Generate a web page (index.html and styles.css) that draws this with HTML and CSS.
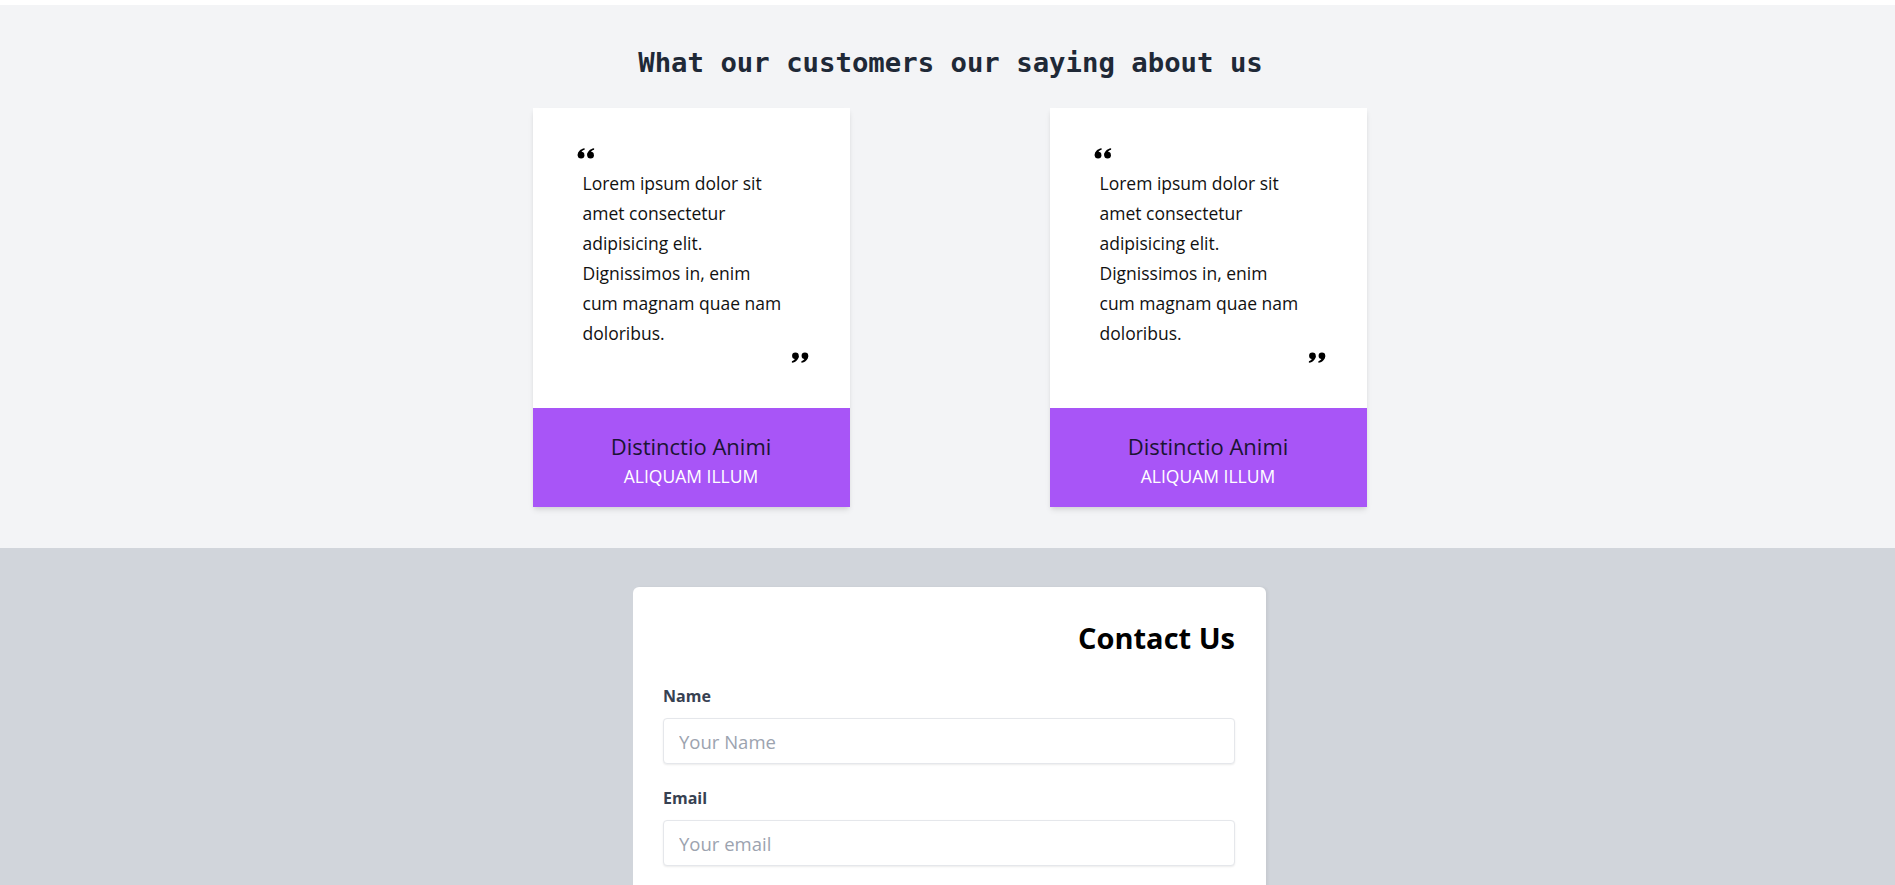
FILE: index.html
```html
<!DOCTYPE html>
<html lang="en">
<head>
<meta charset="utf-8">
<title>Testimonials</title>
<link rel="stylesheet" href="styles.css">
</head>
<body>
<section class="testimonials">
  <h2 class="section-title">What our customers our saying about us</h2>
  <div class="cards">
    <div class="card">
      <div class="card-body">
        <svg class="quote quote-open" viewBox="0 0 20 12" width="19" height="12" aria-hidden="true">
          <circle cx="4.3" cy="8.3" r="3.5"/>
          <path d="M0.8 8.3 C0.8 4.6 3.4 1.6 8 0.9 L8 2.7 C5.6 3.2 4.2 4.9 4.2 7.2 Z"/>
          <circle cx="14.3" cy="8.3" r="3.5"/>
          <path d="M10.8 8.3 C10.8 4.6 13.4 1.6 18 0.9 L18 2.7 C15.6 3.2 14.2 4.9 14.2 7.2 Z"/>
        </svg>
        <p class="quote-text">Lorem ipsum dolor sit<br>amet consectetur<br>adipisicing elit.<br>Dignissimos in, enim<br>cum magnam quae nam<br>doloribus.</p>
        <svg class="quote quote-close" viewBox="0 0 20 12" width="19" height="12" aria-hidden="true">
          <g transform="rotate(180 10 6)">
            <circle cx="4.3" cy="8.3" r="3.5"/>
            <path d="M0.8 8.3 C0.8 4.6 3.4 1.6 8 0.9 L8 2.7 C5.6 3.2 4.2 4.9 4.2 7.2 Z"/>
            <circle cx="14.3" cy="8.3" r="3.5"/>
            <path d="M10.8 8.3 C10.8 4.6 13.4 1.6 18 0.9 L18 2.7 C15.6 3.2 14.2 4.9 14.2 7.2 Z"/>
          </g>
        </svg>
      </div>
      <div class="card-footer">
        <div class="person-name">Distinctio Animi</div>
        <div class="person-role">ALIQUAM ILLUM</div>
      </div>
    </div>
    <div class="card">
      <div class="card-body">
        <svg class="quote quote-open" viewBox="0 0 20 12" width="19" height="12" aria-hidden="true">
          <circle cx="4.3" cy="8.3" r="3.5"/>
          <path d="M0.8 8.3 C0.8 4.6 3.4 1.6 8 0.9 L8 2.7 C5.6 3.2 4.2 4.9 4.2 7.2 Z"/>
          <circle cx="14.3" cy="8.3" r="3.5"/>
          <path d="M10.8 8.3 C10.8 4.6 13.4 1.6 18 0.9 L18 2.7 C15.6 3.2 14.2 4.9 14.2 7.2 Z"/>
        </svg>
        <p class="quote-text">Lorem ipsum dolor sit<br>amet consectetur<br>adipisicing elit.<br>Dignissimos in, enim<br>cum magnam quae nam<br>doloribus.</p>
        <svg class="quote quote-close" viewBox="0 0 20 12" width="19" height="12" aria-hidden="true">
          <g transform="rotate(180 10 6)">
            <circle cx="4.3" cy="8.3" r="3.5"/>
            <path d="M0.8 8.3 C0.8 4.6 3.4 1.6 8 0.9 L8 2.7 C5.6 3.2 4.2 4.9 4.2 7.2 Z"/>
            <circle cx="14.3" cy="8.3" r="3.5"/>
            <path d="M10.8 8.3 C10.8 4.6 13.4 1.6 18 0.9 L18 2.7 C15.6 3.2 14.2 4.9 14.2 7.2 Z"/>
          </g>
        </svg>
      </div>
      <div class="card-footer">
        <div class="person-name">Distinctio Animi</div>
        <div class="person-role">ALIQUAM ILLUM</div>
      </div>
    </div>
  </div>
</section>
<section class="contact">
  <form class="contact-card">
    <h2 class="contact-title">Contact Us</h2>
    <div class="field">
      <label class="field-label" for="name">Name</label>
      <input class="field-input" id="name" type="text" placeholder="Your Name">
    </div>
    <div class="field">
      <label class="field-label" for="email">Email</label>
      <input class="field-input" id="email" type="email" placeholder="Your email">
    </div>
  </form>
</section>
</body>
</html>
```

FILE: styles.css
```css
* { box-sizing: border-box; }
html, body { margin: 0; padding: 0; }
body {
  padding-top: 5px;
  background: #ffffff;
  font-family: "Open Sans", "Noto Sans", sans-serif;
  color: #111827;
}

.testimonials {
  background: #f3f4f6;
  padding: 40px 0 41px;
}
.section-title {
  margin: 0 0 27px;
  padding-left: 6px;
  text-align: center;
  font-family: "DejaVu Sans Mono", "Liberation Mono", monospace;
  font-weight: bold;
  font-size: 27.3px;
  line-height: 36px;
  color: #1f2937;
}
.cards {
  display: flex;
  justify-content: center;
  gap: 200px;
  padding-left: 4px;
}
.card {
  width: 317px;
  background: #ffffff;
  box-shadow: 0 4px 6px -1px rgba(0,0,0,0.1), 0 2px 4px -1px rgba(0,0,0,0.06);
  display: flex;
  flex-direction: column;
}
.card-body {
  height: 300px;
  padding: 39px 41px 0 40px;
  display: flex;
  flex-direction: column;
}
.quote { display: block; fill: #000000; flex: none; }
.quote-open { margin-left: 4px; }
.quote-close { align-self: flex-end; margin-top: 4px; }
.quote-text {
  margin: 9px 0 0;
  padding-left: 10px;
  font-size: 17.5px;
  line-height: 30px;
  color: #111111;
  white-space: nowrap;
}
.card-footer {
  height: 99px;
  background: #a855f7;
  text-align: center;
  padding-top: 23px;
}
.person-name {
  font-size: 22px;
  line-height: 30px;
  color: #1a1433;
}
.person-role {
  margin-top: 3px;
  font-size: 17.5px;
  line-height: 24px;
  color: #ffffff;
}

.contact {
  background: #d1d5db;
  padding-top: 39px;
  padding-left: 4px;
  min-height: 337px;
}
.contact-card {
  width: 633px;
  margin: 0 auto;
  background: #ffffff;
  border-radius: 6px 6px 0 0;
  padding: 33px 31px 40px 30px;
  box-shadow: 2px 0 3px rgba(0,0,0,0.05);
  min-height: 298px;
}
.contact-title {
  margin: 0 0 28px;
  text-align: right;
  font-size: 29px;
  line-height: 36px;
  font-weight: bold;
  color: #000000;
}
.field { margin-bottom: 22px; }
.field-label {
  display: block;
  font-size: 16px;
  line-height: 24px;
  font-weight: bold;
  color: #374151;
  margin-bottom: 10px;
}
.field-input {
  display: block;
  width: 100%;
  height: 46px;
  border: 1px solid #e5e7eb;
  border-radius: 4px;
  box-shadow: 0 1px 2px rgba(0,0,0,0.08);
  padding: 0 15px;
  font-family: "Open Sans", "Noto Sans", sans-serif;
  font-size: 18.5px;
  color: #111827;
  background: #ffffff;
}
.field-input::placeholder { color: #9ca3af; }
```
